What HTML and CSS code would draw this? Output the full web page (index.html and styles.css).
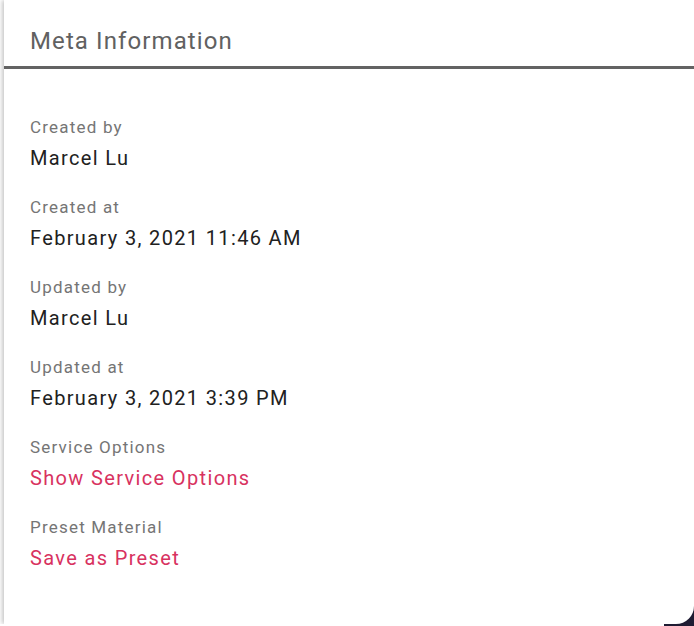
FILE: index.html
```html
<!DOCTYPE HTML>
<html>
<head>
<link rel="stylesheet" href="styles.css">
</head>
<body>
<div class="corner"></div>
<section class="meta-card">
    <h2 class="meta-title">Meta Information</h2>
    <div class="meta-list">
        <div class="meta-item">
            <div class="meta-label">Created by</div>
            <div class="meta-value">Marcel Lu</div>
        </div>
        <div class="meta-item">
            <div class="meta-label">Created at</div>
            <div class="meta-value">February 3, 2021 11:46 AM</div>
        </div>
        <div class="meta-item">
            <div class="meta-label">Updated by</div>
            <div class="meta-value">Marcel Lu</div>
        </div>
        <div class="meta-item">
            <div class="meta-label">Updated at</div>
            <div class="meta-value">February 3, 2021 3:39 PM</div>
        </div>
        <div class="meta-item">
            <div class="meta-label">Service Options</div>
            <a class="meta-value meta-link" href="#">Show Service Options</a>
        </div>
        <div class="meta-item">
            <div class="meta-label">Preset Material</div>
            <a class="meta-value meta-link" href="#">Save as Preset</a>
        </div>
    </div>
</section>
</body>
</html>
```

FILE: styles.css
```css
body {
    margin: 0;
    padding: 0;
    background: #fff;
    font-family: Roboto, "Liberation Sans", sans-serif;
    overflow: hidden;
}

.corner {
    position: absolute;
    right: 0;
    bottom: 0;
    width: 30px;
    height: 30px;
    background: #1f1c33;
}

.meta-card {
    position: relative;
    margin-left: 4px;
    height: 624px;
    background: #fff;
    border-bottom-right-radius: 18px;
    box-shadow: -2px 0 4px rgba(0, 0, 0, 0.22);
}

.meta-title {
    margin: 0;
    padding: 27px 0 0 26px;
    height: 39px;
    border-bottom: 3px solid #636363;
    font-size: 24px;
    font-weight: 400;
    line-height: 28px;
    letter-spacing: 1.1px;
    color: #616161;
}

.meta-list {
    display: flex;
    flex-direction: column;
    gap: 20px;
    padding: 47px 0 0 26px;
}

.meta-label {
    font-size: 17px;
    line-height: 22px;
    letter-spacing: 1.2px;
    color: #757575;
}

.meta-value {
    display: block;
    padding-top: 2px;
    font-size: 20px;
    line-height: 36px;
    letter-spacing: 1.35px;
    color: #212121;
    text-decoration: none;
}

.meta-link {
    color: #d8325f;
}
```
